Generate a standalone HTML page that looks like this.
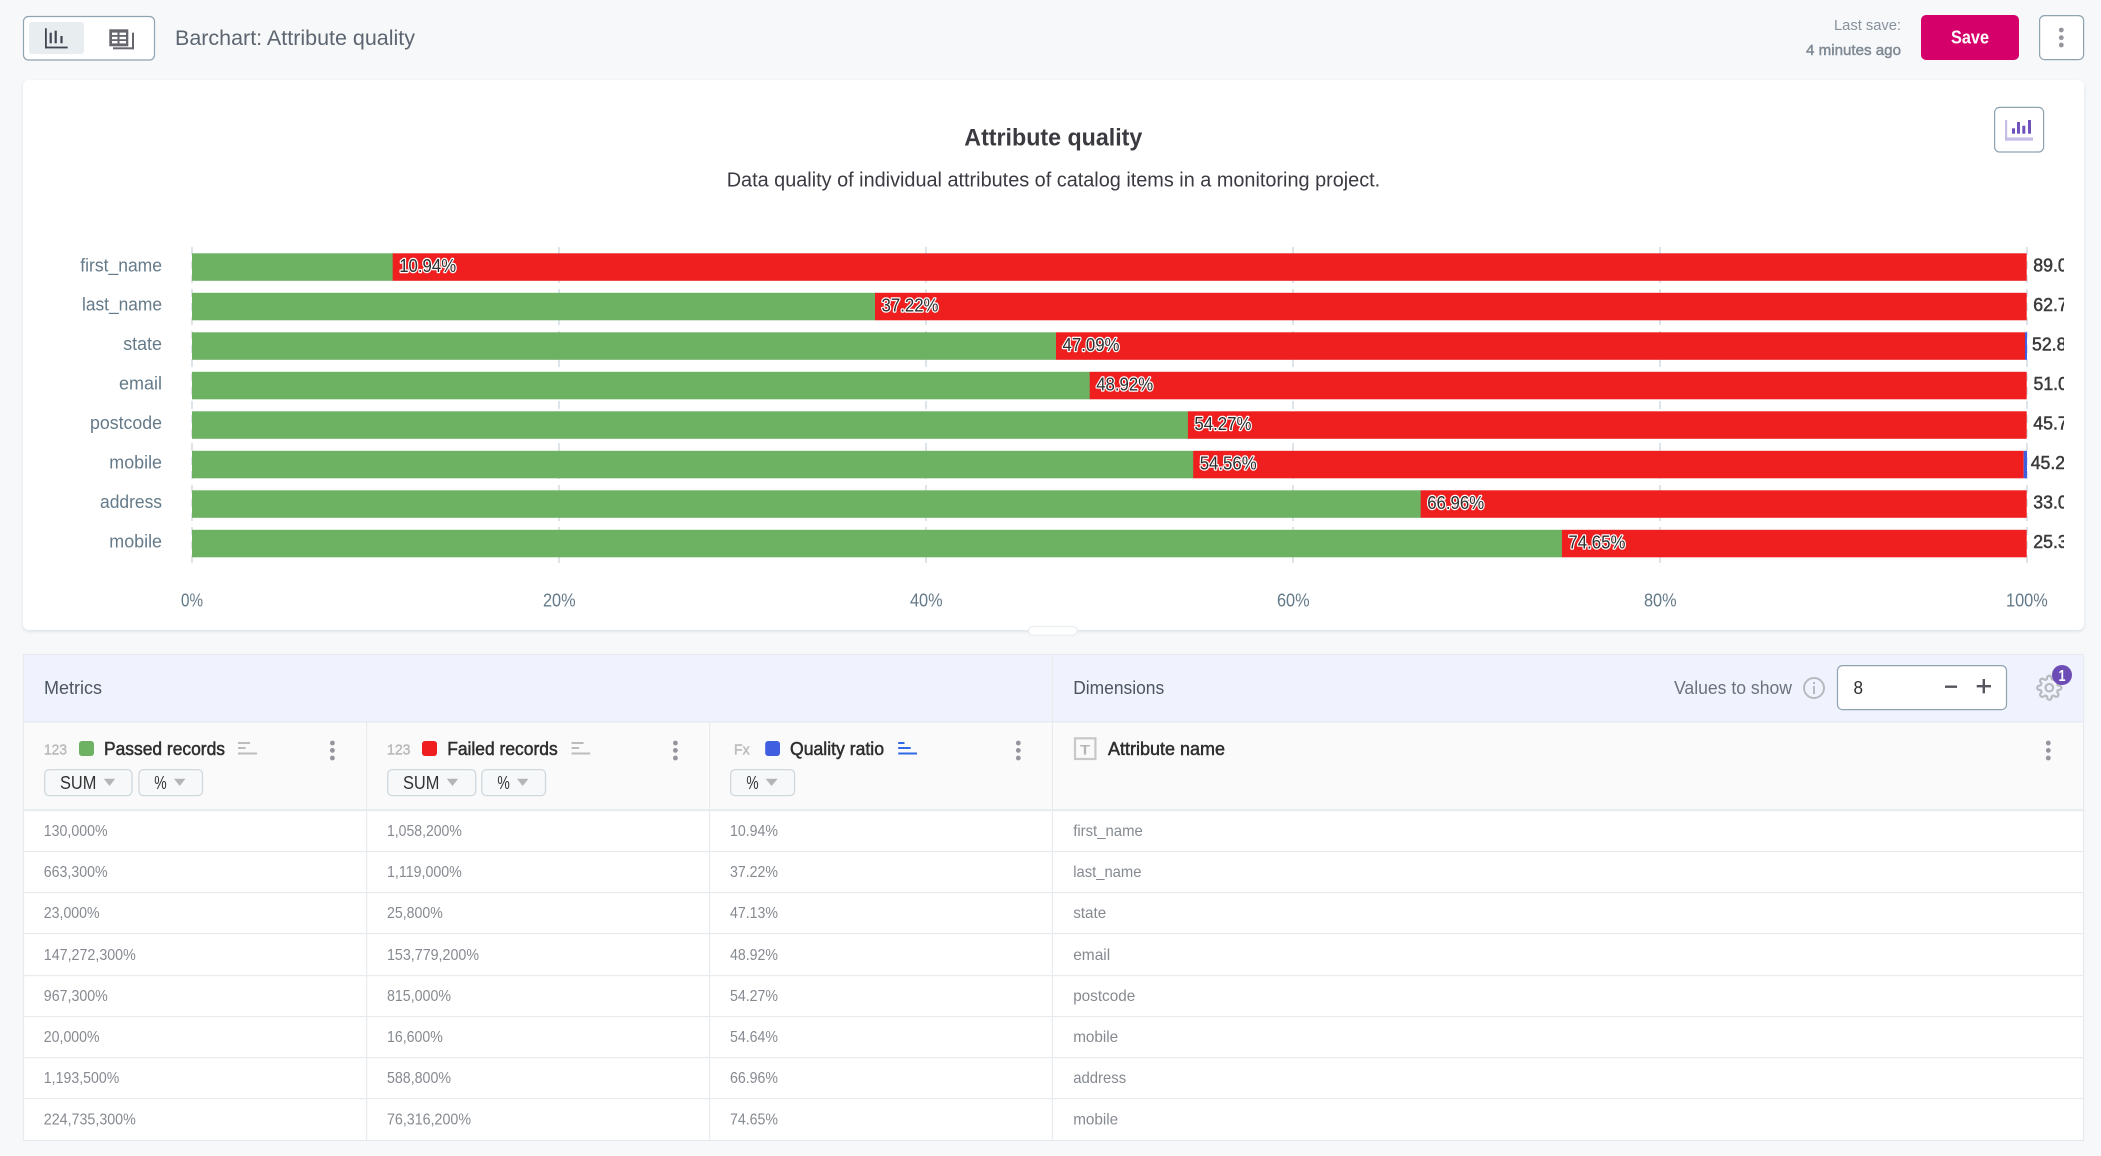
<!DOCTYPE html>
<html><head><meta charset="utf-8"><title>Barchart: Attribute quality</title>
<style>
html,body{margin:0;padding:0;background:#f6f8fa;overflow:hidden}
svg{display:block}
text{font-family:"Liberation Sans",sans-serif}
.cat{font-size:18px;fill:#647a89;text-anchor:end}
.ax{font-size:18px;fill:#647a89}
.lb{font-size:18px;fill:#2e2e2e;stroke:#fff;stroke-width:2.4px;paint-order:stroke;stroke-linejoin:round}
.rv{font-size:18px;fill:#3a3a3a;stroke:#3a3a3a;stroke-width:.5}
.td{font-size:16px;fill:#858a90}
.hd{font-size:18px;fill:#2e2e2e;stroke:#2e2e2e;stroke-width:.5}
.ty{font-size:15px;fill:#bcbcbc;stroke:#bcbcbc;stroke-width:.5}
.pl{fill:#f6f8fa;stroke:#cfd8dd;stroke-width:1.3}
.pt{font-size:18px;fill:#333}
.tri{fill:#b5b5b5}
.dot{fill:#95959d}
.gr{stroke:#d2dce4;stroke-width:1.5;stroke-dasharray:8 6}
.g{fill:#6db263}.r{fill:#ef1f1f}.bl{fill:#3f5fe0}
</style></head>
<body>
<svg xmlns="http://www.w3.org/2000/svg" width="2101" height="1156" viewBox="0 0 2101 1156">
<defs><clipPath id="c"><rect x="2028" y="240" width="36" height="330"/></clipPath>
<filter id="s" x="-2%" y="-2%" width="104%" height="104%"><feDropShadow dx="0" dy="1.5" stdDeviation="1.5" flood-color="#b8c4cc" flood-opacity=".45"/></filter></defs>
<rect width="2101" height="1156" fill="#f6f8fa"/>

<!-- top bar -->
<rect x="23.5" y="16.5" width="131" height="43.5" rx="5" fill="#fff" stroke="#8fa3b0" stroke-width="1.2"/>
<rect x="29" y="22" width="55" height="32" rx="3" fill="#e8edf0"/>
<g fill="#3f4652">
<rect x="45" y="28.3" width="1.8" height="20"/><rect x="45" y="46.6" width="22.7" height="1.8"/>
<rect x="49.6" y="32.7" width="2.2" height="10.6"/><rect x="54.6" y="30.7" width="2.2" height="12.6"/><rect x="60.4" y="36" width="2.2" height="7.3"/>
</g>
<g fill="#66666e">
<rect x="109.3" y="29.3" width="19" height="17"/>
<rect x="132" y="32.7" width="2" height="16.6"/><rect x="113" y="47.3" width="21" height="2"/>
</g>
<g fill="#fff">
<rect x="112" y="32.6" width="5.5" height="2.4"/><rect x="119.5" y="32.6" width="6.5" height="2.4"/>
<rect x="112" y="36.8" width="5.5" height="2.4"/><rect x="119.5" y="36.8" width="6.5" height="2.4"/>
<rect x="112" y="41" width="5.5" height="2.4"/><rect x="119.5" y="41" width="6.5" height="2.4"/>
</g>
<text x="175" y="45" font-size="21" fill="#5d6670" textLength="240" lengthAdjust="spacingAndGlyphs">Barchart: Attribute quality</text>
<text x="1834" y="30" font-size="15" fill="#87919b" textLength="67" lengthAdjust="spacingAndGlyphs">Last save:</text>
<text x="1806" y="55" font-size="15" fill="#7f8993" stroke="#7f8993" stroke-width=".45" textLength="95" lengthAdjust="spacingAndGlyphs">4 minutes ago</text>
<rect x="1921" y="15" width="98" height="45" rx="5" fill="#d5006a"/>
<text x="1951" y="43.5" font-size="18" font-weight="700" fill="#fff" textLength="38" lengthAdjust="spacingAndGlyphs">Save</text>
<rect x="2039.6" y="15.6" width="44" height="44" rx="5" fill="#fff" stroke="#8fa3b0" stroke-width="1.2"/>
<circle class="dot" cx="2061.3" cy="30" r="2.4" fill="#85858f"/><circle class="dot" cx="2061.3" cy="37.7" r="2.4"/><circle class="dot" cx="2061.3" cy="45" r="2.4"/>

<!-- chart panel -->
<rect x="23" y="80" width="2061" height="550" rx="6" fill="#fff" filter="url(#s)"/>
<rect x="1994.6" y="107.4" width="49" height="44.6" rx="5" fill="#fff" stroke="#8fa3b0" stroke-width="1.2"/>
<g fill="#c9bfe6"><rect x="2005" y="120" width="2.2" height="20.7"/><rect x="2005" y="137.4" width="28" height="3.3"/></g>
<g fill="#6f52bb"><rect x="2012" y="128.3" width="3" height="5.4"/><rect x="2017" y="122" width="3" height="11.7"/><rect x="2022.3" y="125.7" width="3" height="8"/><rect x="2028" y="120" width="3" height="13.7"/></g>
<text x="964.3" y="145.7" font-size="24.5" font-weight="700" fill="#3a3a40" textLength="178" lengthAdjust="spacingAndGlyphs">Attribute quality</text>
<text x="726.7" y="186.5" font-size="20" fill="#3a3a42" textLength="653.5" lengthAdjust="spacingAndGlyphs">Data quality of individual attributes of catalog items in a monitoring project.</text>

<g class="gr"><path d="M192 247V563M559 247V563M926 247V563M1293 247V563M1660 247V563M2027 247V563" fill="none"/></g>

<g>
<rect class="g" x="192" y="253.3" width="201" height="27.5"/><rect class="r" x="392.7" y="253.3" width="1634" height="27.5"/>
<rect class="g" x="192" y="292.8" width="683" height="27.5"/><rect class="r" x="875" y="292.8" width="1151.7" height="27.5"/>
<rect class="g" x="192" y="332.3" width="864" height="27.5"/><rect class="r" x="1056" y="332.3" width="969" height="27.5"/><rect class="bl" x="2025" y="332.3" width="2" height="27.5"/>
<rect class="g" x="192" y="371.8" width="898" height="27.5"/><rect class="r" x="1089.7" y="371.8" width="937" height="27.5"/>
<rect class="g" x="192" y="411.3" width="996" height="27.5"/><rect class="r" x="1187.9" y="411.3" width="838.8" height="27.5"/>
<rect class="g" x="192" y="450.8" width="1001.5" height="27.5"/><rect class="r" x="1193.2" y="450.8" width="830.5" height="27.5"/><rect class="bl" x="2023.7" y="450.8" width="3.3" height="27.5"/>
<rect class="g" x="192" y="490.3" width="1229" height="27.5"/><rect class="r" x="1420.7" y="490.3" width="606" height="27.5"/>
<rect class="g" x="192" y="529.8" width="1370" height="27.5"/><rect class="r" x="1561.9" y="529.8" width="464.8" height="27.5"/>
</g>

<text class="cat" x="162" y="271.5" textLength="81.7" lengthAdjust="spacingAndGlyphs">first_name</text>
<text class="cat" x="162" y="310.7" textLength="80" lengthAdjust="spacingAndGlyphs">last_name</text>
<text class="cat" x="162" y="350.2" textLength="38.8" lengthAdjust="spacingAndGlyphs">state</text>
<text class="cat" x="162" y="389.7" textLength="43" lengthAdjust="spacingAndGlyphs">email</text>
<text class="cat" x="162" y="429.2" textLength="72" lengthAdjust="spacingAndGlyphs">postcode</text>
<text class="cat" x="162" y="468.7" textLength="52.7" lengthAdjust="spacingAndGlyphs">mobile</text>
<text class="cat" x="162" y="508.2" textLength="62" lengthAdjust="spacingAndGlyphs">address</text>
<text class="cat" x="162" y="547.7" textLength="52.7" lengthAdjust="spacingAndGlyphs">mobile</text>

<text class="lb" x="399.2" y="272" textLength="57" lengthAdjust="spacingAndGlyphs">10.94%</text>
<text class="lb" x="881.5" y="311.3" textLength="57" lengthAdjust="spacingAndGlyphs">37.22%</text>
<text class="lb" x="1062.5" y="350.8" textLength="57" lengthAdjust="spacingAndGlyphs">47.09%</text>
<text class="lb" x="1096.2" y="390.3" textLength="57" lengthAdjust="spacingAndGlyphs">48.92%</text>
<text class="lb" x="1194.4" y="429.8" textLength="57" lengthAdjust="spacingAndGlyphs">54.27%</text>
<text class="lb" x="1199.7" y="469.3" textLength="57" lengthAdjust="spacingAndGlyphs">54.56%</text>
<text class="lb" x="1427.2" y="508.8" textLength="57" lengthAdjust="spacingAndGlyphs">66.96%</text>
<text class="lb" x="1568.4" y="548.3" textLength="57" lengthAdjust="spacingAndGlyphs">74.65%</text>

<g clip-path="url(#c)">
<text class="rv" x="2033.3" y="271.7" textLength="60" lengthAdjust="spacingAndGlyphs">89.06%</text>
<text class="rv" x="2033.3" y="311.2" textLength="60" lengthAdjust="spacingAndGlyphs">62.78%</text>
<text class="rv" x="2032" y="350.7" textLength="60" lengthAdjust="spacingAndGlyphs">52.87%</text>
<text class="rv" x="2033.5" y="390.2" textLength="60" lengthAdjust="spacingAndGlyphs">51.08%</text>
<text class="rv" x="2033.3" y="429.7" textLength="60" lengthAdjust="spacingAndGlyphs">45.73%</text>
<text class="rv" x="2030.7" y="469.2" textLength="60" lengthAdjust="spacingAndGlyphs">45.29%</text>
<text class="rv" x="2033.3" y="508.7" textLength="60" lengthAdjust="spacingAndGlyphs">33.04%</text>
<text class="rv" x="2033.3" y="548.2" textLength="60" lengthAdjust="spacingAndGlyphs">25.35%</text>
</g>

<text class="ax" x="181" y="606.5" textLength="22" lengthAdjust="spacingAndGlyphs">0%</text>
<text class="ax" x="543" y="606.5" textLength="32.6" lengthAdjust="spacingAndGlyphs">20%</text>
<text class="ax" x="910" y="606.5" textLength="32.6" lengthAdjust="spacingAndGlyphs">40%</text>
<text class="ax" x="1277" y="606.5" textLength="32.6" lengthAdjust="spacingAndGlyphs">60%</text>
<text class="ax" x="1644" y="606.5" textLength="32.6" lengthAdjust="spacingAndGlyphs">80%</text>
<text class="ax" x="2006" y="606.5" textLength="41.7" lengthAdjust="spacingAndGlyphs">100%</text>

<rect x="1028.5" y="626.3" width="48.6" height="9" rx="4.5" fill="#fff" stroke="#e8edf0" stroke-width="1.2"/>

<!-- table -->
<rect x="23.5" y="654.5" width="2060" height="486" fill="#fff" stroke="#e6ebef" stroke-width="1.2"/>
<rect x="24" y="655" width="2059" height="67" fill="#f0f3fe"/>
<rect x="24" y="722" width="2059" height="87" fill="#fafafb"/>
<rect x="24" y="721.2" width="2059" height="1.2" fill="#e4e9f0"/>
<rect x="24" y="809" width="2059" height="2.2" fill="#e8edf0"/>
<g fill="#e8ecef">
<rect x="24" y="851" width="2059" height="1.2"/><rect x="24" y="892" width="2059" height="1.2"/><rect x="24" y="933" width="2059" height="1.2"/><rect x="24" y="975" width="2059" height="1.2"/><rect x="24" y="1016" width="2059" height="1.2"/><rect x="24" y="1057" width="2059" height="1.2"/><rect x="24" y="1098" width="2059" height="1.2"/>
<rect x="366" y="722" width="1.2" height="418"/><rect x="709" y="722" width="1.2" height="418"/><rect x="1051.8" y="655" width="1.2" height="485"/>
</g>

<text x="44" y="694" font-size="18" fill="#4c5560" textLength="58" lengthAdjust="spacingAndGlyphs">Metrics</text>
<text x="1073.2" y="694" font-size="18" fill="#4c5560" textLength="91" lengthAdjust="spacingAndGlyphs">Dimensions</text>
<text x="1674" y="694" font-size="18" fill="#6a727c" textLength="118" lengthAdjust="spacingAndGlyphs">Values to show</text>
<circle cx="1814" cy="688" r="10" fill="none" stroke="#b7babf" stroke-width="2"/>
<rect x="1813" y="686" width="2" height="8" fill="#b7babf"/><rect x="1813" y="682" width="2" height="2.2" fill="#b7babf"/>
<rect x="1837.5" y="665.6" width="169" height="44" rx="5" fill="#fff" stroke="#8fa3b0" stroke-width="1.2"/>
<text x="1853.5" y="694" font-size="18" fill="#2e2e2e" textLength="9.5" lengthAdjust="spacingAndGlyphs">8</text>
<rect x="1945" y="685.5" width="12" height="2.4" fill="#55555d"/>
<rect x="1976.7" y="685" width="14.3" height="2.4" fill="#55555d"/><rect x="1982.6" y="679" width="2.4" height="14.3" fill="#55555d"/>
<g transform="translate(2036.1 674.5) scale(1.1)" fill="none" stroke="#b7babf" stroke-width="2"><circle cx="12" cy="12" r="3.4"/><path d="M19.4 15a1.65 1.65 0 0 0 .33 1.82l.06.06a2 2 0 0 1 0 2.83 2 2 0 0 1-2.83 0l-.06-.06a1.65 1.65 0 0 0-1.82-.33 1.65 1.65 0 0 0-1 1.51V21a2 2 0 0 1-2 2 2 2 0 0 1-2-2v-.09A1.65 1.65 0 0 0 9 19.4a1.65 1.65 0 0 0-1.82.33l-.06.06a2 2 0 0 1-2.83 0 2 2 0 0 1 0-2.83l.06-.06a1.65 1.65 0 0 0 .33-1.82 1.65 1.65 0 0 0-1.51-1H3a2 2 0 0 1-2-2 2 2 0 0 1 2-2h.09A1.65 1.65 0 0 0 4.6 9a1.65 1.65 0 0 0-.33-1.82l-.06-.06a2 2 0 0 1 0-2.83 2 2 0 0 1 2.83 0l.06.06a1.65 1.65 0 0 0 1.82.33H9a1.65 1.65 0 0 0 1-1.51V3a2 2 0 0 1 2-2 2 2 0 0 1 2 2v.09a1.65 1.65 0 0 0 1 1.51 1.65 1.65 0 0 0 1.82-.33l.06-.06a2 2 0 0 1 2.83 0 2 2 0 0 1 0 2.83l-.06.06a1.65 1.65 0 0 0-.33 1.82V9a1.65 1.65 0 0 0 1.51 1H21a2 2 0 0 1 2 2 2 2 0 0 1-2 2h-.09a1.65 1.65 0 0 0-1.51 1z"/></g>
<circle cx="2062" cy="675" r="10" fill="#6c4db5"/>
<text x="2058.5" y="681" font-size="16" font-weight="700" fill="#fff" textLength="7" lengthAdjust="spacingAndGlyphs">1</text>

<!-- column headers -->
<text class="ty" x="44" y="754.3" textLength="23" lengthAdjust="spacingAndGlyphs">123</text>
<rect x="79" y="741" width="15" height="15" rx="3" fill="#6db263"/>
<text class="hd" x="104" y="755" textLength="121" lengthAdjust="spacingAndGlyphs">Passed records</text>
<g fill="#bcbcbc"><rect x="238" y="742" width="12" height="2"/><rect x="238" y="747" width="7.6" height="2"/><rect x="238" y="752.5" width="19" height="2"/></g>
<g class="dot"><circle cx="332.4" cy="743" r="2.4"/><circle cx="332.4" cy="750.4" r="2.4"/><circle cx="332.4" cy="758" r="2.4"/></g>
<rect class="pl" x="44.7" y="769.6" width="87.3" height="26" rx="4.5"/>
<text class="pt" x="60" y="789" textLength="36.4" lengthAdjust="spacingAndGlyphs">SUM</text>
<path class="tri" d="M103.8 778.7H115.2L109.5 786Z"/>
<rect class="pl" x="138.9" y="769.6" width="63.6" height="26" rx="4.5"/>
<text class="pt" x="154.3" y="789" textLength="12.4" lengthAdjust="spacingAndGlyphs">%</text>
<path class="tri" d="M174 778.7H185.5L179.7 786Z"/>

<text class="ty" x="387" y="754.3" textLength="23.5" lengthAdjust="spacingAndGlyphs">123</text>
<rect x="422" y="741" width="15" height="15" rx="3" fill="#ef1f1f"/>
<text class="hd" x="447.2" y="755" textLength="110.5" lengthAdjust="spacingAndGlyphs">Failed records</text>
<g fill="#bcbcbc"><rect x="571.6" y="742" width="12" height="2"/><rect x="571.6" y="747" width="7.6" height="2"/><rect x="571.6" y="752.5" width="18.6" height="2"/></g>
<g class="dot"><circle cx="675.4" cy="743" r="2.4"/><circle cx="675.4" cy="750.4" r="2.4"/><circle cx="675.4" cy="758" r="2.4"/></g>
<rect class="pl" x="387.7" y="769.6" width="88" height="26" rx="4.5"/>
<text class="pt" x="403" y="789" textLength="36.4" lengthAdjust="spacingAndGlyphs">SUM</text>
<path class="tri" d="M446.8 778.7H458.2L452.5 786Z"/>
<rect class="pl" x="481.8" y="769.6" width="63.7" height="26" rx="4.5"/>
<text class="pt" x="497.4" y="789" textLength="12.4" lengthAdjust="spacingAndGlyphs">%</text>
<path class="tri" d="M517 778.7H528.5L522.7 786Z"/>

<text class="ty" x="734" y="754.3" textLength="15.6" lengthAdjust="spacingAndGlyphs">Fx</text>
<rect x="765.2" y="741" width="14.8" height="15" rx="3" fill="#3f5fe0"/>
<text class="hd" x="790" y="755" textLength="94" lengthAdjust="spacingAndGlyphs">Quality ratio</text>
<g fill="#2e6be6"><rect x="898.2" y="742" width="6.3" height="2"/><rect x="898.2" y="747" width="12.5" height="2"/><rect x="898.2" y="752.5" width="18.8" height="2"/></g>
<g class="dot"><circle cx="1018.3" cy="743" r="2.4"/><circle cx="1018.3" cy="750.4" r="2.4"/><circle cx="1018.3" cy="758" r="2.4"/></g>
<rect class="pl" x="730.6" y="769.6" width="64" height="26" rx="4.5"/>
<text class="pt" x="746.4" y="789" textLength="12.2" lengthAdjust="spacingAndGlyphs">%</text>
<path class="tri" d="M765.6 778.7H777.7L771.6 786Z"/>

<rect x="1075" y="738.3" width="20.4" height="20.7" fill="none" stroke="#c8c8c8" stroke-width="2.2"/>
<text x="1080" y="754.3" font-size="14" font-weight="700" fill="#b5b5b5" textLength="10" lengthAdjust="spacingAndGlyphs">T</text>
<text class="hd" x="1108" y="755" textLength="117" lengthAdjust="spacingAndGlyphs">Attribute name</text>
<g class="dot"><circle cx="2048.3" cy="743" r="2.4"/><circle cx="2048.3" cy="750.4" r="2.4"/><circle cx="2048.3" cy="758" r="2.4"/></g>

<!-- rows -->
<text class="td" x="43.8" y="836" textLength="63.8" lengthAdjust="spacingAndGlyphs">130,000%</text>
<text class="td" x="387" y="836" textLength="74.8" lengthAdjust="spacingAndGlyphs">1,058,200%</text>
<text class="td" x="730" y="836" textLength="48" lengthAdjust="spacingAndGlyphs">10.94%</text>
<text class="td" x="1073.2" y="836" textLength="69.6" lengthAdjust="spacingAndGlyphs">first_name</text>

<text class="td" x="43.8" y="876.8" textLength="63.8" lengthAdjust="spacingAndGlyphs">663,300%</text>
<text class="td" x="387" y="876.8" textLength="74.8" lengthAdjust="spacingAndGlyphs">1,119,000%</text>
<text class="td" x="730" y="876.8" textLength="48" lengthAdjust="spacingAndGlyphs">37.22%</text>
<text class="td" x="1073.2" y="876.8" textLength="68.3" lengthAdjust="spacingAndGlyphs">last_name</text>

<text class="td" x="43.8" y="917.8" textLength="55.8" lengthAdjust="spacingAndGlyphs">23,000%</text>
<text class="td" x="387" y="917.8" textLength="55.8" lengthAdjust="spacingAndGlyphs">25,800%</text>
<text class="td" x="730" y="917.8" textLength="48" lengthAdjust="spacingAndGlyphs">47.13%</text>
<text class="td" x="1073.2" y="917.8" textLength="33" lengthAdjust="spacingAndGlyphs">state</text>

<text class="td" x="43.8" y="959.8" textLength="92" lengthAdjust="spacingAndGlyphs">147,272,300%</text>
<text class="td" x="387" y="959.8" textLength="92" lengthAdjust="spacingAndGlyphs">153,779,200%</text>
<text class="td" x="730" y="959.8" textLength="48" lengthAdjust="spacingAndGlyphs">48.92%</text>
<text class="td" x="1073.2" y="959.8" textLength="37" lengthAdjust="spacingAndGlyphs">email</text>

<text class="td" x="43.8" y="1000.8" textLength="64" lengthAdjust="spacingAndGlyphs">967,300%</text>
<text class="td" x="387" y="1000.8" textLength="64" lengthAdjust="spacingAndGlyphs">815,000%</text>
<text class="td" x="730" y="1000.8" textLength="48" lengthAdjust="spacingAndGlyphs">54.27%</text>
<text class="td" x="1073.2" y="1000.8" textLength="62" lengthAdjust="spacingAndGlyphs">postcode</text>

<text class="td" x="43.8" y="1041.8" textLength="55.8" lengthAdjust="spacingAndGlyphs">20,000%</text>
<text class="td" x="387" y="1041.8" textLength="55.8" lengthAdjust="spacingAndGlyphs">16,600%</text>
<text class="td" x="730" y="1041.8" textLength="48" lengthAdjust="spacingAndGlyphs">54.64%</text>
<text class="td" x="1073.2" y="1041.8" textLength="45" lengthAdjust="spacingAndGlyphs">mobile</text>

<text class="td" x="43.8" y="1083" textLength="75.5" lengthAdjust="spacingAndGlyphs">1,193,500%</text>
<text class="td" x="387" y="1083" textLength="64" lengthAdjust="spacingAndGlyphs">588,800%</text>
<text class="td" x="730" y="1083" textLength="48" lengthAdjust="spacingAndGlyphs">66.96%</text>
<text class="td" x="1073.2" y="1083" textLength="53" lengthAdjust="spacingAndGlyphs">address</text>

<text class="td" x="43.8" y="1124.5" textLength="92" lengthAdjust="spacingAndGlyphs">224,735,300%</text>
<text class="td" x="387" y="1124.5" textLength="84" lengthAdjust="spacingAndGlyphs">76,316,200%</text>
<text class="td" x="730" y="1124.5" textLength="48" lengthAdjust="spacingAndGlyphs">74.65%</text>
<text class="td" x="1073.2" y="1124.5" textLength="45" lengthAdjust="spacingAndGlyphs">mobile</text>
</svg>
</body></html>
